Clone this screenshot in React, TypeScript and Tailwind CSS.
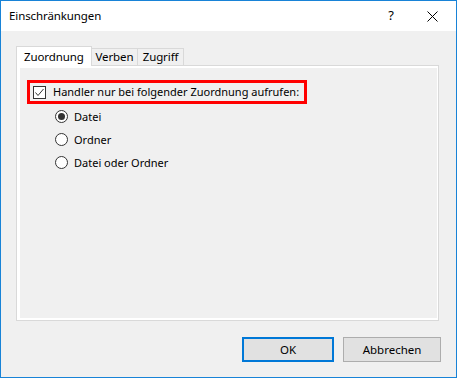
import React from "react";

const font = { fontFamily: '"Noto Sans", "Open Sans", Arial, sans-serif' };

function Radio({ checked, label }: { checked?: boolean; label: string }) {
  return (
    <div className="flex items-center h-[23px]">
      <div className="w-[13px] h-[13px] rounded-full border border-[#333333] bg-white flex items-center justify-center">
        {checked && <div className="w-[7px] h-[7px] rounded-full bg-[#333333]" />}
      </div>
      <span className="ml-[6px] text-[11px] text-black leading-none">{label}</span>
    </div>
  );
}

export default function App() {
  return (
    <div
      className="w-[457px] h-[378px] border border-[#1883d7] bg-[#f0f0f0] flex flex-col overflow-hidden"
      style={font}
    >
      {/* Title bar */}
      <div className="h-[30px] bg-white flex items-center shrink-0">
        <span className="ml-[8px] text-[11.5px] tracking-[-0.1px] text-black">Einschränkungen</span>
        <span className="ml-auto text-[13px] text-black mr-[33px]">?</span>
        <svg width="11" height="11" viewBox="0 0 11 11" className="mr-[18px]">
          <path d="M0.5 0.5 L10.5 10.5 M10.5 0.5 L0.5 10.5" stroke="#000" strokeWidth="1" />
        </svg>
      </div>

      {/* Body */}
      <div className="flex-1 flex flex-col pl-[15px] pt-[15px]">
        {/* Tabs */}
        <div className="flex items-end h-[19px] relative z-10">
          <div className="w-[76px] h-[20px] -mb-px bg-white border border-b-0 border-[#d9d9d9] flex items-start pl-[7px] pt-[1px]">
            <span className="text-[11.5px] tracking-[-0.1px] text-black">Zuordnung</span>
          </div>
          <div className="w-[46px] h-[17px] border border-l-0 border-b-0 border-[#d9d9d9] flex items-center justify-center">
            <span className="text-[11.5px] tracking-[-0.1px] text-black">Verben</span>
          </div>
          <div className="w-[46px] h-[17px] border border-l-0 border-b-0 border-[#d9d9d9] flex items-center justify-center">
            <span className="text-[11.5px] tracking-[-0.1px] text-black">Zugriff</span>
          </div>
        </div>

        {/* Panel */}
        <div className="w-[423px] h-[256px] border border-[#d9d9d9] bg-white pl-[3px] pt-[2px] pr-[1px] pb-[2px] flex">
          <div className="flex-1 bg-[#f0f0f0] flex flex-col pl-[7px] pt-[12px]">
            <div className="w-[280px] h-[24px] border-[3px] border-[#ff0000] flex items-center pl-[3px]">
              <div className="w-[13px] h-[13px] border border-[#333333] bg-white flex items-center justify-center">
                <svg width="11" height="11" viewBox="0 0 11 11">
                  <path d="M1.5 5.5 L4 8.5 L9.5 2" stroke="#333" strokeWidth="1" fill="none" />
                </svg>
              </div>
              <span className="ml-[7px] text-[11px] text-black whitespace-nowrap">
                Handler nur bei folgender Zuordnung aufrufen:
              </span>
            </div>
            <div className="flex flex-col pl-[28px] pt-[1px]">
              <Radio checked label="Datei" />
              <Radio label="Ordner" />
              <Radio label="Datei oder Ordner" />
            </div>
          </div>
        </div>

        {/* Buttons */}
        <div className="flex justify-end pr-[15px] pt-[16px] gap-[9px]">
          <button className="w-[92px] h-[25px] bg-[#e1e1e1] border-2 border-[#0078d7] text-[11.5px] text-black">
            OK
          </button>
          <button className="w-[98px] h-[25px] bg-[#e1e1e1] border border-[#adadad] text-[11.5px] text-black">
            Abbrechen
          </button>
        </div>
      </div>
    </div>
  );
}
